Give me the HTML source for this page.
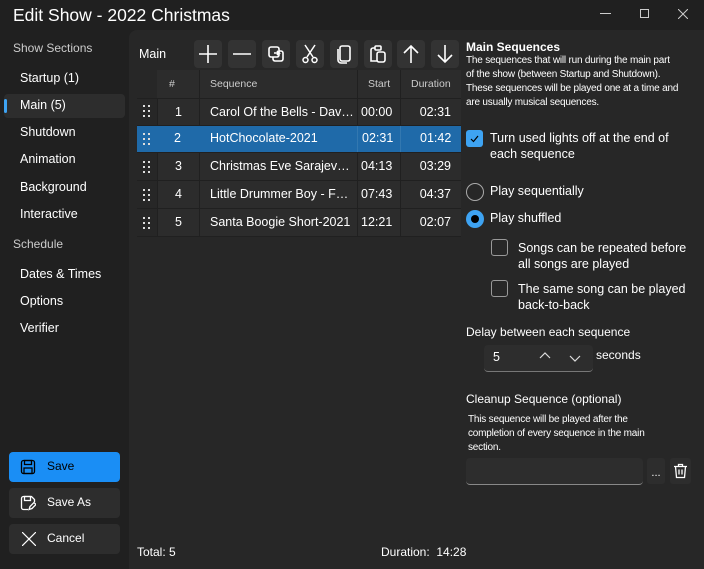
<!DOCTYPE html>
<html><head><style>
*{box-sizing:border-box;margin:0;padding:0}
body{width:704px;height:569px;background:#202020;font-family:"Segoe UI","Liberation Sans",sans-serif;color:#fff;position:relative;overflow:hidden;font-size:12.5px}
.a{position:absolute;white-space:nowrap}
.panel{position:absolute;left:129px;top:30px;width:575px;height:539px;background:#272727;border-top-left-radius:8px}
.nav{left:20px;font-size:12.5px}
.tb{position:absolute;top:40px;width:28px;height:28px;background:#333;border-radius:4px}
.tb svg{position:absolute;left:4px;top:4px}
.cell{position:absolute;background:#2c2c2c;font-size:12.5px;white-space:nowrap;overflow:hidden;text-overflow:ellipsis}
.hd{color:#ccc;font-size:10.5px}
.btn{position:absolute;left:9px;width:111px;height:30px;border-radius:4px;background:#2d2d2d;font-size:12px}
.cb{position:absolute;width:17px;height:17px;border:1px solid #999;border-radius:3px}
.rd{position:absolute;width:18px;height:18px;border:1px solid #aaa;border-radius:50%}
</style></head><body>
<div class="a" style="left:13px;top:5px;font-size:17.5px">Edit Show - 2022 Christmas</div>
<div class="a" style="left:600px;top:13px;width:11px;height:1px;background:#ccc"></div>
<div class="a" style="left:640px;top:9px;width:9px;height:9px;border:1px solid #ccc"></div>
<svg class="a" style="left:678px;top:9px" width="10" height="10" viewBox="0 0 10 10" stroke="#ccc" stroke-width="1"><path d="M0 0l10 10M10 0L0 10"/></svg>

<div class="a" style="left:13px;top:41px;font-size:12px;color:#ccc">Show Sections</div>
<div class="a nav" style="top:71px">Startup (1)</div>
<div class="a" style="left:4px;top:94px;width:121px;height:24px;background:#2d2d2d;border-radius:4px"></div>
<div class="a" style="left:4px;top:99px;width:3px;height:14px;background:#3ea3f2;border-radius:2px"></div>
<div class="a nav" style="top:98px">Main (5)</div>
<div class="a nav" style="top:125px">Shutdown</div>
<div class="a nav" style="top:152px">Animation</div>
<div class="a nav" style="top:180px">Background</div>
<div class="a nav" style="top:207px">Interactive</div>
<div class="a" style="left:13px;top:237px;font-size:12px;color:#ccc">Schedule</div>
<div class="a nav" style="top:267px">Dates &amp; Times</div>
<div class="a nav" style="top:294px">Options</div>
<div class="a nav" style="top:321px">Verifier</div>

<div class="btn" style="top:452px;background:#1a8ef5;color:#000"><svg class="a" style="left:11px;top:7px" width="16" height="16" viewBox="0 0 16 16" fill="none" stroke="#000" stroke-width="1.3"><rect x="1.5" y="1.5" width="13" height="13" rx="2"/><rect x="4.5" y="1.5" width="7" height="4"/><rect x="4" y="9" width="8" height="5.5"/></svg><span class="a" style="left:38px;top:7px">Save</span></div>
<div class="btn" style="top:488px"><svg class="a" style="left:11px;top:7px" width="16" height="16" viewBox="0 0 16 16" fill="none" stroke="#fff" stroke-width="1.3"><path d="M8 14.5H3.5a2 2 0 0 1-2-2v-9a2 2 0 0 1 2-2h8l3 3V7"/><rect x="4.5" y="1.5" width="6" height="4"/><path d="M9 14.5l1-3 4-4 2 2-4 4z"/></svg><span class="a" style="left:38px;top:7px">Save As</span></div>
<div class="btn" style="top:524px"><svg class="a" style="left:13px;top:8px" width="14" height="14" viewBox="0 0 14 14" stroke="#fff" stroke-width="1.2"><path d="M0 0l14 14M14 0L0 14"/></svg><span class="a" style="left:38px;top:7px">Cancel</span></div>

<div class="panel"></div>
<div class="a" style="left:139px;top:47px">Main</div>
<div class="tb" style="left:194px"><svg width="20" height="20" viewBox="0 0 20 20" stroke="#fff" stroke-width="1.6"><path d="M10 1v18M1 10h18"/></svg></div>
<div class="tb" style="left:228px"><svg width="20" height="20" viewBox="0 0 20 20" stroke="#fff" stroke-width="1.6"><path d="M1 10h18"/></svg></div>
<div class="tb" style="left:262px"><svg width="20" height="20" viewBox="0 0 20 20" fill="none" stroke="#fff" stroke-width="1.6"><rect x="3" y="3" width="10" height="10" rx="2"/><path d="M7 13v2a2 2 0 0 0 2 2h6a2 2 0 0 0 2-2V9a2 2 0 0 0-2-2h-2M8 9h5l-2-2M13 9l-2 2"/></svg></div>
<div class="tb" style="left:296px"><svg width="20" height="20" viewBox="0 0 20 20" fill="none" stroke="#fff" stroke-width="1.5"><path d="M5 1l8 12M15 1L7 13"/><circle cx="5.5" cy="16" r="2.5"/><circle cx="14.5" cy="16" r="2.5"/></svg></div>
<div class="tb" style="left:330px"><svg width="20" height="20" viewBox="0 0 20 20" fill="none" stroke="#fff" stroke-width="1.6"><rect x="6" y="2" width="10" height="15" rx="2"/><path d="M4 5v11a3 3 0 0 0 3 3h6"/></svg></div>
<div class="tb" style="left:364px"><svg width="20" height="20" viewBox="0 0 20 20" fill="none" stroke="#fff" stroke-width="1.6"><path d="M7 4H5a2 2 0 0 0-2 2v11h6"/><rect x="7" y="2" width="6" height="4" rx="1"/><rect x="9" y="8" width="8" height="10" rx="2"/></svg></div>
<div class="tb" style="left:397px"><svg width="20" height="20" viewBox="0 0 20 20" fill="none" stroke="#fff" stroke-width="1.6"><path d="M10 19V2M3 9l7-7 7 7"/></svg></div>
<div class="tb" style="left:431px"><svg width="20" height="20" viewBox="0 0 20 20" fill="none" stroke="#fff" stroke-width="1.6"><path d="M10 1v17M3 11l7 7 7-7"/></svg></div>

<div class="a" style="left:157px;top:70px;width:304px;height:28px;background:#2c2c2c"></div>
<div class="a hd" style="left:169px;top:78px">#</div>
<div class="a" style="left:199px;top:70px;width:1px;height:28px;background:#202020"></div>
<div class="a hd" style="left:210px;top:78px">Sequence</div>
<div class="a" style="left:357px;top:70px;width:1px;height:28px;background:#202020"></div>
<div class="a hd" style="left:368px;top:78px">Start</div>
<div class="a" style="left:400px;top:70px;width:1px;height:28px;background:#202020"></div>
<div class="a hd" style="left:411px;top:78px">Duration</div>

<div class="a" style="left:137px;top:98px;width:324px;height:139px;background:#202020"></div>
<div class="a" style="left:137px;top:99px;width:20px;height:26px;background:#272727"></div>
<div class="a" style="left:137px;top:126px;width:324px;height:26px;background:#1f6aa9"></div>
<div class="a" style="left:137px;top:153px;width:20px;height:27px;background:#272727"></div>
<div class="a" style="left:137px;top:181px;width:20px;height:27px;background:#272727"></div>
<div class="a" style="left:137px;top:209px;width:20px;height:27px;background:#272727"></div>

<div class="cell" style="left:158px;top:99px;width:41px;height:26px;line-height:26px;text-align:center">1</div>
<div class="cell" style="left:200px;top:99px;width:157px;height:26px;line-height:26px;padding-left:10px;padding-right:2px">Carol Of the Bells - David Foster</div>
<div class="cell" style="left:358px;top:99px;width:42px;height:26px;line-height:26px;padding-left:3px">00:00</div>
<div class="cell" style="left:401px;top:99px;width:60px;height:26px;line-height:26px;text-align:right;padding-right:10px">02:31</div>

<div class="a" style="left:174px;top:131px">2</div>
<div class="a" style="left:210px;top:131px">HotChocolate-2021</div>
<div class="a" style="left:362px;top:131px">02:31</div>
<div class="a" style="left:420px;top:131px">01:42</div>
<div class="a" style="left:357px;top:126px;width:1px;height:26px;background:#3378b0"></div>
<div class="a" style="left:400px;top:126px;width:1px;height:26px;background:#3378b0"></div>

<div class="cell" style="left:158px;top:153px;width:41px;height:27px;line-height:27px;text-align:center">3</div>
<div class="cell" style="left:200px;top:153px;width:157px;height:27px;line-height:27px;padding-left:10px;padding-right:2px">Christmas Eve Sarajevo-2021</div>
<div class="cell" style="left:358px;top:153px;width:42px;height:27px;line-height:27px;padding-left:3px">04:13</div>
<div class="cell" style="left:401px;top:153px;width:60px;height:27px;line-height:27px;text-align:right;padding-right:10px">03:29</div>

<div class="cell" style="left:158px;top:181px;width:41px;height:27px;line-height:27px;text-align:center">4</div>
<div class="cell" style="left:200px;top:181px;width:157px;height:27px;line-height:27px;padding-left:10px;padding-right:2px">Little Drummer Boy - ForKing</div>
<div class="cell" style="left:358px;top:181px;width:42px;height:27px;line-height:27px;padding-left:3px">07:43</div>
<div class="cell" style="left:401px;top:181px;width:60px;height:27px;line-height:27px;text-align:right;padding-right:10px">04:37</div>

<div class="cell" style="left:158px;top:209px;width:41px;height:27px;line-height:27px;text-align:center">5</div>
<div class="cell" style="left:200px;top:209px;width:157px;height:27px;line-height:27px;padding-left:10px">Santa Boogie Short-2021</div>
<div class="cell" style="left:358px;top:209px;width:42px;height:27px;line-height:27px;padding-left:3px">12:21</div>
<div class="cell" style="left:401px;top:209px;width:60px;height:27px;line-height:27px;text-align:right;padding-right:10px">02:07</div>

<div class="a" style="left:143px;top:105px"><svg width="8" height="12" viewBox="0 0 8 12" fill="#ddd"><rect x="0" y="0" width="2" height="2"/><rect x="5" y="0" width="2" height="2"/><rect x="0" y="5" width="2" height="2"/><rect x="5" y="5" width="2" height="2"/><rect x="0" y="10" width="2" height="2"/><rect x="5" y="10" width="2" height="2"/></svg></div>
<div class="a" style="left:143px;top:133px"><svg width="8" height="12" viewBox="0 0 8 12" fill="#ddd"><rect x="0" y="0" width="2" height="2"/><rect x="5" y="0" width="2" height="2"/><rect x="0" y="5" width="2" height="2"/><rect x="5" y="5" width="2" height="2"/><rect x="0" y="10" width="2" height="2"/><rect x="5" y="10" width="2" height="2"/></svg></div>
<div class="a" style="left:143px;top:161px"><svg width="8" height="12" viewBox="0 0 8 12" fill="#ddd"><rect x="0" y="0" width="2" height="2"/><rect x="5" y="0" width="2" height="2"/><rect x="0" y="5" width="2" height="2"/><rect x="5" y="5" width="2" height="2"/><rect x="0" y="10" width="2" height="2"/><rect x="5" y="10" width="2" height="2"/></svg></div>
<div class="a" style="left:143px;top:189px"><svg width="8" height="12" viewBox="0 0 8 12" fill="#ddd"><rect x="0" y="0" width="2" height="2"/><rect x="5" y="0" width="2" height="2"/><rect x="0" y="5" width="2" height="2"/><rect x="5" y="5" width="2" height="2"/><rect x="0" y="10" width="2" height="2"/><rect x="5" y="10" width="2" height="2"/></svg></div>
<div class="a" style="left:143px;top:217px"><svg width="8" height="12" viewBox="0 0 8 12" fill="#ddd"><rect x="0" y="0" width="2" height="2"/><rect x="5" y="0" width="2" height="2"/><rect x="0" y="5" width="2" height="2"/><rect x="5" y="5" width="2" height="2"/><rect x="0" y="10" width="2" height="2"/><rect x="5" y="10" width="2" height="2"/></svg></div>

<div class="a" style="left:137px;top:545px;font-size:12px">Total: 5</div>
<div class="a" style="left:381px;top:545px;font-size:12px">Duration:&nbsp; 14:28</div>

<div class="a" style="left:466px;top:40px;font-size:12px;font-weight:bold">Main Sequences</div>
<div class="a" style="left:466px;top:54px;font-size:10px;line-height:14px;letter-spacing:-0.2px">The sequences that will run during the main part<br>of the show (between Startup and Shutdown).<br>These sequences will be played one at a time and<br>are usually musical sequences.</div>

<div class="a" style="left:466px;top:130px;width:17px;height:17px;background:#3ea3f2;border-radius:3px"><svg width="17" height="17" viewBox="0 0 17 17" fill="none" stroke="#000" stroke-width="1.2"><path d="M5 9l2.5 2.5L12 6"/></svg></div>
<div class="a" style="left:490px;top:130px;line-height:16px">Turn used lights off at the end of<br>each sequence</div>
<div class="rd" style="left:466px;top:183px"></div>
<div class="a" style="left:490px;top:184px">Play sequentially</div>
<div class="a" style="left:466px;top:210px;width:18px;height:18px;border-radius:50%;background:#3ea3f2"><div class="a" style="left:5px;top:5px;width:8px;height:8px;border-radius:50%;background:#000"></div></div>
<div class="a" style="left:490px;top:211px">Play shuffled</div>
<div class="cb" style="left:491px;top:239px"></div>
<div class="a" style="left:518px;top:240px;line-height:16px">Songs can be repeated before<br>all songs are played</div>
<div class="cb" style="left:491px;top:280px"></div>
<div class="a" style="left:518px;top:281px;line-height:16px">The same song can be played<br>back-to-back</div>

<div class="a" style="left:466px;top:325px;font-size:12px">Delay between each sequence</div>
<div class="a" style="left:484px;top:345px;width:109px;height:27px;background:#2d2d2d;border-radius:4px;border-bottom:1px solid #777"></div>
<div class="a" style="left:493px;top:350px">5</div>
<svg class="a" style="left:539px;top:352px" width="12" height="8" viewBox="0 0 12 8" fill="none" stroke="#ddd" stroke-width="1.2"><path d="M1 6l5-5 5 5"/></svg>
<svg class="a" style="left:569px;top:354px" width="12" height="8" viewBox="0 0 12 8" fill="none" stroke="#ddd" stroke-width="1.2"><path d="M1 2l5 5 5-5"/></svg>
<div class="a" style="left:596px;top:348px;font-size:12px">seconds</div>

<div class="a" style="left:466px;top:392px;font-size:12px">Cleanup Sequence (optional)</div>
<div class="a" style="left:468px;top:413px;font-size:10px;line-height:14px;letter-spacing:-0.2px">This sequence will be played after the<br>completion of every sequence in the main<br>section.</div>
<div class="a" style="left:466px;top:458px;width:177px;height:27px;background:#2d2d2d;border-radius:4px;border-bottom:1px solid #888"></div>
<div class="a" style="left:647px;top:458px;width:18px;height:26px;background:#2d2d2d;border-radius:3px;font-size:11px;text-align:center;line-height:30px">...</div>
<div class="a" style="left:670px;top:458px;width:21px;height:26px;background:#2d2d2d;border-radius:3px"><svg class="a" style="left:3px;top:5px" width="15" height="16" viewBox="0 0 15 16" fill="none" stroke="#fff" stroke-width="1.3"><path d="M1 3.5h13M5.5 3.5V1.5h4v2M2.5 3.5l1 11h8l1-11M6 6.5v5M9 6.5v5"/></svg></div>
</body></html>
